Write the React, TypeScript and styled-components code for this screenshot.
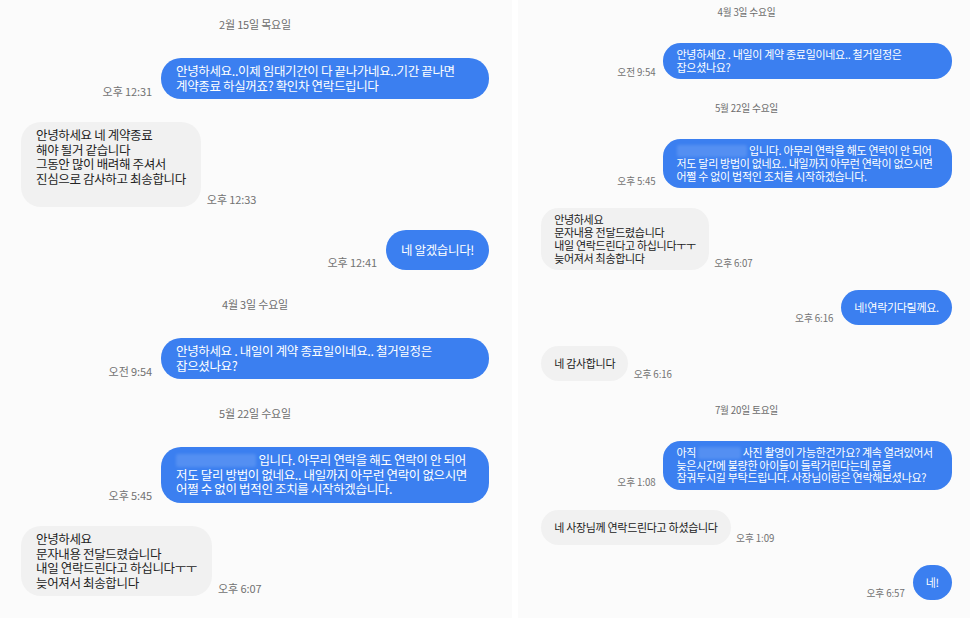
import styled, { createGlobalStyle } from "styled-components";
import { Fragment, ReactNode } from "react";

type Item =
  | { kind: "date"; text: string }
  | {
      kind: "msg";
      out: boolean;
      time: string;
      full?: boolean;
      trailing?: boolean;
      body: ReactNode;
    };

const GlobalStyle = createGlobalStyle`
  html, body {
    margin: 0;
    padding: 0;
    background: #ffffff;
  }
  body {
    font-family: "Noto Sans CJK KR", "Noto Sans", sans-serif;
  }
`;

const Page = styled.div`
  display: flex;
  gap: 6px;
  width: 974px;
  height: 618px;
  background: #ffffff;
  overflow: hidden;
`;

const Panel = styled.section<{
  $w: number;
  $s: number;
  $top: number;
  $left: number;
  $right: number;
}>`
  --s: ${(p) => p.$s};
  flex: 0 0 ${(p) => p.$w}px;
  height: 100%;
  box-sizing: border-box;
  padding: ${(p) => p.$top}px ${(p) => p.$right}px 0 ${(p) => p.$left}px;
  background: #fbfbfb;
  display: flex;
  flex-direction: column;
  gap: calc(23px * var(--s));
  overflow: hidden;
`;

const DateLine = styled.div`
  flex-shrink: 0;
  text-align: center;
  font-size: calc(11px * var(--s));
  line-height: calc(22px * var(--s));
  letter-spacing: calc(-0.2px * var(--s));
  color: #6d6d6d;
`;

const Row = styled.div<{ $out: boolean }>`
  flex-shrink: 0;
  display: flex;
  flex-direction: ${(p) => (p.$out ? "row-reverse" : "row")};
  justify-content: flex-start;
  align-items: flex-end;
  gap: ${(p) => (p.$out ? "calc(9px * var(--s))" : "calc(6px * var(--s))")};
`;

const Bubble = styled.div<{ $out: boolean; $full?: boolean; $trailing?: boolean }>`
  box-sizing: border-box;
  display: flex;
  align-items: center;
  min-height: calc(40px * var(--s));
  width: ${(p) => (p.$full ? "calc(328px * var(--s))" : "auto")};
  padding: calc(6px * var(--s)) calc(15px * var(--s))
    ${(p) =>
      p.$trailing ? "calc(20.5px * var(--s))" : "calc(6px * var(--s))"};
  border-radius: calc(20px * var(--s));
  background: ${(p) => (p.$out ? "#3b7ff0" : "#f1f1f1")};
  color: ${(p) => (p.$out ? "#ffffff" : "#232323")};
`;

const BubbleText = styled.p`
  margin: 0;
  white-space: pre;
  font-size: calc(12.5px * var(--s));
  line-height: calc(14.6px * var(--s));
  letter-spacing: calc(-0.35px * var(--s));
`;

const Hidden = styled.span<{ $w: number }>`
  display: inline-block;
  width: calc(${(p) => p.$w}px * var(--s));
  height: calc(13px * var(--s));
  vertical-align: calc(-2px * var(--s));
  background: rgba(255, 255, 255, 0.13);
  border-radius: 2px;
  filter: blur(1.5px);
`;

const Time = styled.span`
  flex-shrink: 0;
  margin-bottom: calc(1px * var(--s));
  white-space: nowrap;
  font-size: calc(11px * var(--s));
  line-height: calc(14px * var(--s));
  letter-spacing: calc(-0.1px * var(--s));
  color: #727272;
`;

const msgApr3: Item = {
  kind: "msg",
  out: true,
  time: "오전 9:54",
  full: true,
  body: "안녕하세요 . 내일이 계약 종료일이네요.. 철거일정은\n잡으셨나요?",
};

const msgLegal: Item = {
  kind: "msg",
  out: true,
  time: "오후 5:45",
  full: true,
  body: (
    <>
      <Hidden $w={80} />
      {
        " 입니다. 아무리 연락을 해도 연락이 안 되어\n저도 달리 방법이 없네요.. 내일까지 아무런 연락이 없으시면\n어쩔 수 없이 법적인 조치를 시작하겠습니다."
      }
    </>
  ),
};

const msgReply: Item = {
  kind: "msg",
  out: false,
  time: "오후 6:07",
  body: "안녕하세요\n문자내용 전달드렸습니다\n내일 연락드린다고 하십니다ㅜㅜ\n늦어져서 최송합니다",
};

const msgWait: Item = {
  kind: "msg",
  out: true,
  time: "오후 6:16",
  body: "네!연락기다릴께요.",
};

const leftItems: Item[] = [
  { kind: "date", text: "2월 15일 목요일" },
  {
    kind: "msg",
    out: true,
    time: "오후 12:31",
    full: true,
    body: "안녕하세요..이제 임대기간이 다 끝나가네요..기간 끝나면\n계약종료 하실꺼죠? 확인차 연락드립니다",
  },
  {
    kind: "msg",
    out: false,
    time: "오후 12:33",
    trailing: true,
    body: "안녕하세요 네 계약종료\n해야 될거 같습니다\n그동안 많이 배려해 주셔서\n진심으로 감사하고 최송합니다",
  },
  { kind: "msg", out: true, time: "오후 12:41", body: "네 알겠습니다!" },
  { kind: "date", text: "4월 3일 수요일" },
  msgApr3,
  { kind: "date", text: "5월 22일 수요일" },
  msgLegal,
  msgReply,
  msgWait,
];

const rightItems: Item[] = [
  { kind: "date", text: "4월 3일 수요일" },
  msgApr3,
  { kind: "date", text: "5월 22일 수요일" },
  msgLegal,
  msgReply,
  msgWait,
  { kind: "msg", out: false, time: "오후 6:16", body: "네 감사합니다" },
  { kind: "date", text: "7월 20일 토요일" },
  {
    kind: "msg",
    out: true,
    time: "오후 1:08",
    full: true,
    body: (
      <>
        {"아직 "}
        <Hidden $w={48} />
        {
          " 사진 촬영이 가능한건가요? 계속 열려있어서\n늦은시간에 불량한 아이들이 들락거린다는데 문을\n잠궈두시길 부탁드립니다. 사장님이랑은 연락해보셨나요?"
        }
      </>
    ),
  },
  {
    kind: "msg",
    out: false,
    time: "오후 1:09",
    body: "네 사장님께 연락드린다고 하셨습니다",
  },
  { kind: "msg", out: true, time: "오후 6:57", body: "네!" },
];

function Thread({ items }: { items: Item[] }) {
  return (
    <>
      {items.map((item, i) => (
        <Fragment key={i}>
          {item.kind === "date" ? (
            <DateLine>{item.text}</DateLine>
          ) : (
            <Row $out={item.out}>
              <Bubble $out={item.out} $full={item.full} $trailing={item.trailing}>
                <BubbleText>{item.body}</BubbleText>
              </Bubble>
              <Time>{item.time}</Time>
            </Row>
          )}
        </Fragment>
      ))}
    </>
  );
}

export default function App() {
  return (
    <>
      <GlobalStyle />
      <Page>
        <Panel $w={512} $s={1} $top={13} $left={21} $right={23}>
          <Thread items={leftItems} />
        </Panel>
        <Panel $w={452} $s={0.88} $top={3} $left={23} $right={18}>
          <Thread items={rightItems} />
        </Panel>
      </Page>
    </>
  );
}
